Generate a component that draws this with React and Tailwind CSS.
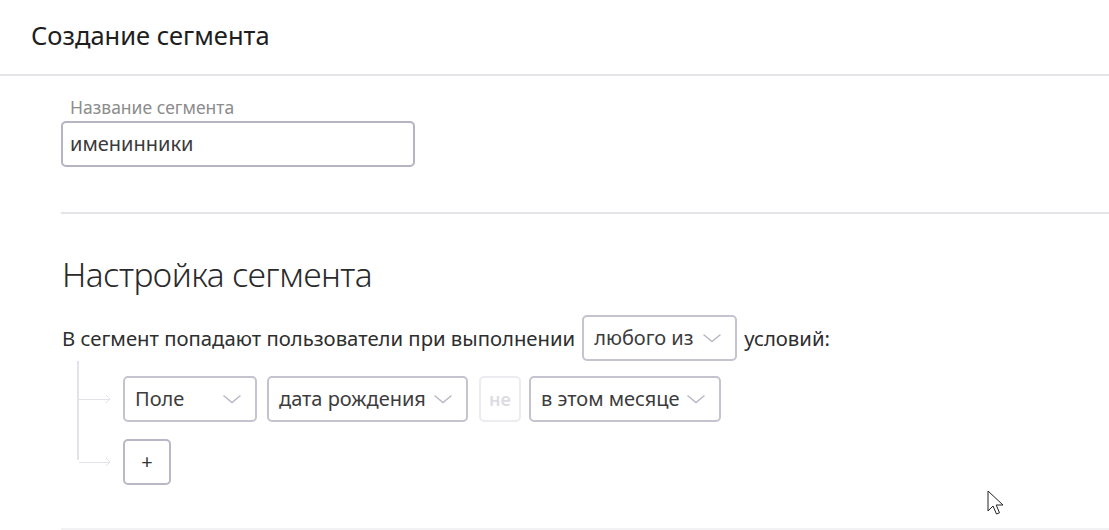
const font = { fontFamily: '"Noto Sans", "Open Sans", sans-serif' };

function Chevron() {
  return (
    <svg width="20" height="10" viewBox="0 0 20 10" className="shrink-0">
      <path d="M1.5 1.5 L10 8.5 L18.5 1.5" fill="none" stroke="#b9b9c6" strokeWidth="1.5" />
    </svg>
  );
}

function Select({ label, width }) {
  return (
    <div className={`h-[46px] ${width} flex items-center justify-between pl-[10px] pr-[13px] border-2 border-[#c4c4d0] rounded-[5px] bg-white text-[20px] leading-[24px] text-[#3c3c3c]`}>
      <span className="whitespace-nowrap">{label}</span>
      <Chevron />
    </div>
  );
}

function Branch() {
  return (
    <div className="w-[44px] h-[46px] flex items-center">
      <div className="flex-1 h-px bg-[#e2e2e8]" />
      <svg width="6" height="10" viewBox="0 0 6 10" className="mr-[12px] -ml-[5px]">
        <path d="M1 1 L5 5 L1 9" fill="none" stroke="#e2e2e8" strokeWidth="1" />
      </svg>
    </div>
  );
}

export default function App() {
  return (
    <div className="w-[1109px] h-[530px] overflow-hidden bg-white relative" style={font}>
      {/* Header */}
      <header className="h-[76px] border-b-2 border-[#e3e3e8] flex items-center pl-[31px] pb-[4px]">
        <h1 className="text-[25.5px] leading-[32px] text-[#1e1e1e]">Создание сегмента</h1>
      </header>

      <main className="pl-[61px]">
        {/* Name field */}
        <div className="pt-[20px] pb-[45px] border-b-2 border-[#e3e3e8]">
          <label className="block pl-[9px] text-[17.5px] leading-[23px] text-[#8c8c8c]">Название сегмента</label>
          <div className="mt-[2px] w-[354px] h-[46px] border-2 border-[#b4b4c2] rounded-[5px] flex items-center pl-[7px] text-[20px] text-[#3a3a3a]">
            именинники
          </div>
        </div>

        {/* Settings */}
        <section className="pt-[40px] pb-[43px] border-b-2 border-[#f2f2f4]">
          <h2 className="pl-px text-[33.5px] leading-[40px] font-light text-[#2a2a2a] tracking-[-0.5px]">Настройка сегмента</h2>

          <div className="mt-[21px] flex items-center gap-[7px] text-[20.3px] leading-[24px] text-[#2e2e2e]">
            <span className="pl-px">В сегмент попадают пользователи при выполнении</span>
            <Select label="любого из" width="w-[155px]" />
            <span>условий:</span>
          </div>

          <div className="flex">
            <div className="ml-[16px] w-[2px] h-[99px] bg-[#e2e2e8] mt-0" />
            <div className="flex flex-col gap-[17px] pt-[15px]">
              <div className="flex items-center">
                <Branch />
                <div className="flex items-center">
                  <Select label="Поле" width="w-[134px]" />
                  <div className="ml-[10px]"><Select label="дата рождения" width="w-[201px]" /></div>
                  <div className="ml-[11px] w-[42px] h-[46px] border-2 border-[#ececf0] rounded-[5px] flex items-center justify-center text-[18px] font-semibold text-[#dcdce2]">не</div>
                  <div className="ml-[8px]"><Select label="в этом месяце" width="w-[192px]" /></div>
                </div>
              </div>
              <div className="flex items-center">
                <Branch />
                <button className="w-[48px] h-[46px] border-2 border-[#b8b8c6] rounded-[5px] text-[20px] text-[#333] flex items-center justify-center">+</button>
              </div>
            </div>
          </div>
        </section>
      </main>

      {/* Mouse cursor */}
      <svg className="absolute left-[987px] top-[490px]" width="20" height="28" viewBox="0 0 20 28">
        <path d="M1 1 L1 21 L6 16 L9.5 24 L12.5 22.8 L9.2 15 L16 15 Z" fill="white" stroke="#222" strokeWidth="1" strokeLinejoin="miter" />
      </svg>
    </div>
  );
}
